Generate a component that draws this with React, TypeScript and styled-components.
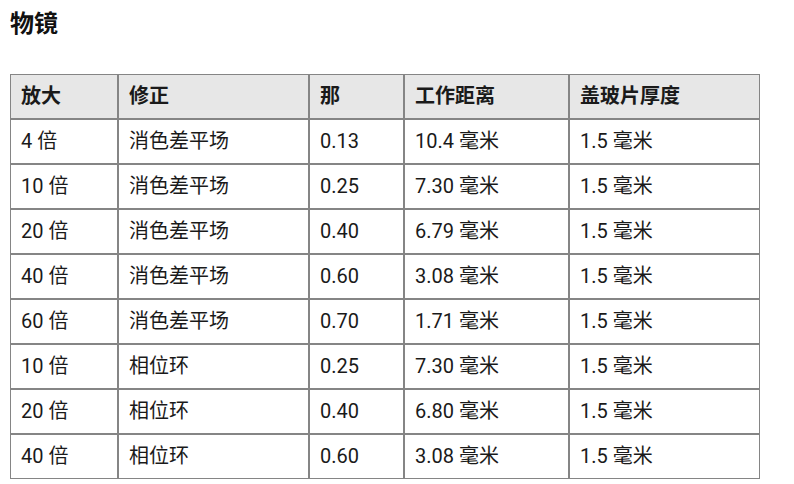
import styled, { createGlobalStyle } from 'styled-components'

const GlobalStyle = createGlobalStyle`
  html, body {
    margin: 0;
    padding: 0;
    background: #ffffff;
  }
  body {
    font-family: Roboto, "Noto Sans CJK SC", sans-serif;
    color: #1a1a1a;
  }
`

const rows = [
  ['4 倍', '消色差平场', '0.13', '10.4 毫米', '1.5 毫米'],
  ['10 倍', '消色差平场', '0.25', '7.30 毫米', '1.5 毫米'],
  ['20 倍', '消色差平场', '0.40', '6.79 毫米', '1.5 毫米'],
  ['40 倍', '消色差平场', '0.60', '3.08 毫米', '1.5 毫米'],
  ['60 倍', '消色差平场', '0.70', '1.71 毫米', '1.5 毫米'],
  ['10 倍', '相位环', '0.25', '7.30 毫米', '1.5 毫米'],
  ['20 倍', '相位环', '0.40', '6.80 毫米', '1.5 毫米'],
  ['40 倍', '相位环', '0.60', '3.08 毫米', '1.5 毫米'],
]

const headers = ['放大', '修正', '那', '工作距离', '盖玻片厚度']
const widths = [108, 191, 95, 165, 191]

const App = () => {
  return (
    <Page>
      <GlobalStyle />
      <Title>物镜</Title>
      <Table>
        <colgroup>
          {widths.map((w, i) => (
            <col key={i} style={{ width: w }} />
          ))}
        </colgroup>
        <thead>
          <tr>
            {headers.map((h) => (
              <HeadCell key={h}>{h}</HeadCell>
            ))}
          </tr>
        </thead>
        <tbody>
          {rows.map((r, i) => (
            <tr key={i}>
              {r.map((c, j) => (
                <Cell key={j}>{c}</Cell>
              ))}
            </tr>
          ))}
        </tbody>
      </Table>
    </Page>
  )
}

export default App

const Page = styled.div`
  padding: 8px 10px;
`

const Title = styled.h2`
  margin: 0 0 34px;
  font-size: 24px;
  line-height: 32px;
  font-weight: 700;
  color: #111;
`

const Table = styled.table`
  width: 750px;
  table-layout: fixed;
  border-collapse: separate;
  border-spacing: 0;
`

const Cell = styled.td`
  box-sizing: border-box;
  border: 1px solid #858585;
  padding: 10px 10px;
  font-size: 20px;
  line-height: 23px;
  text-align: left;
  white-space: nowrap;
`

const HeadCell = styled.th`
  box-sizing: border-box;
  border: 1px solid #858585;
  padding: 10px 10px;
  font-size: 20px;
  line-height: 23px;
  text-align: left;
  font-weight: 700;
  background: #e7e7e7;
  white-space: nowrap;
`
